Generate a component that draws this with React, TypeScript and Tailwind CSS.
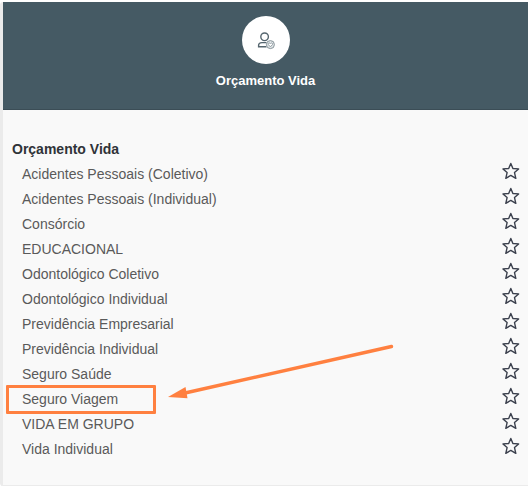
const products = [
  "Acidentes Pessoais (Coletivo)",
  "Acidentes Pessoais (Individual)",
  "Consórcio",
  "EDUCACIONAL",
  "Odontológico Coletivo",
  "Odontológico Individual",
  "Previdência Empresarial",
  "Previdência Individual",
  "Seguro Saúde",
  "Seguro Viagem",
  "VIDA EM GRUPO",
  "Vida Individual",
];

const HIGHLIGHTED = "Seguro Viagem";

function StarIcon() {
  return (
    <svg width="18" height="18" viewBox="0 0 18 18" fill="none" stroke="#3b404d" strokeWidth="1.4" strokeLinejoin="round">
      <path d="M8.8 1.4 L10.9 6.5 L16.6 6.9 L12.5 10.6 L13.8 16.3 L8.8 13.4 L3.8 16.3 L5.1 10.6 L1 6.9 L6.7 6.5 Z" />
    </svg>
  );
}

function UserHeartIcon() {
  return (
    <svg width="20" height="20" viewBox="0 0 20 20" fill="none" stroke="#56666f">
      <circle cx="8.6" cy="6.8" r="3.8" strokeWidth="1.4" />
      <path d="M10.5 16.8 H2.6 V15.6 C2.6 13.6 4.2 12.6 6 12.6 H10.5" strokeWidth="1.4" />
      <circle cx="14.4" cy="14.6" r="4" fill="#e3e7e9" stroke="#87949a" strokeWidth="1" />
      <path d="M14.4 16.8 L12.3 14.6 C11.6 13.2 13.5 12.3 14.4 13.7 C15.3 12.3 17.2 13.2 16.5 14.6 Z" stroke="#87949a" strokeWidth="0.9" fill="#fff" />
    </svg>
  );
}

export default function App() {
  return (
    <div className="relative h-[487px] w-[528px] overflow-hidden bg-white pt-[2px] font-['Liberation_Sans',Arial,sans-serif]">
      <div className="h-[484px] w-full overflow-hidden rounded-l-[3px] border-b border-l-[3px] border-[#ebebeb] bg-[#f9f9f9]">
        <header className="flex h-[108px] flex-col items-center border-b border-[#3b4d56] bg-[#455a64] pt-[14px]">
          <div className="flex size-12 items-center justify-center rounded-full bg-white">
            <UserHeartIcon />
          </div>
          <h1 className="mt-[9px] text-[13px] leading-4 font-bold text-white">Orçamento Vida</h1>
        </header>

        <section className="pt-[27px] pr-[8px] pl-[9px]">
          <h2 className="h-[25px] text-[14px] leading-[25px] font-bold text-[#2f3338]">Orçamento Vida</h2>
          <ul>
            {products.map((name) => (
              <li key={name} className="relative flex h-[25px] items-center justify-between pl-[10px] text-[14px] text-[#5a5a5a]">
                <span>{name}</span>
                <span className="-mt-[7px]">
                  <StarIcon />
                </span>
                {name === HIGHLIGHTED && (
                  <span className="absolute top-[-2px] left-[-6px] h-[29px] w-[150px] rounded-[1px] border-[3px] border-[#ff8040]" />
                )}
              </li>
            ))}
          </ul>
        </section>
      </div>

      {/* Arrow pointing at the highlighted product */}
      <svg className="pointer-events-none absolute inset-0" width="528" height="487" viewBox="0 0 528 487">
        <line x1="391.5" y1="346.5" x2="185" y2="393" stroke="#ff8040" strokeWidth="3.4" strokeLinecap="round" />
        <polygon points="168,397 185.5,387 187.5,398.3" fill="#ff8040" />
      </svg>
    </div>
  );
}
